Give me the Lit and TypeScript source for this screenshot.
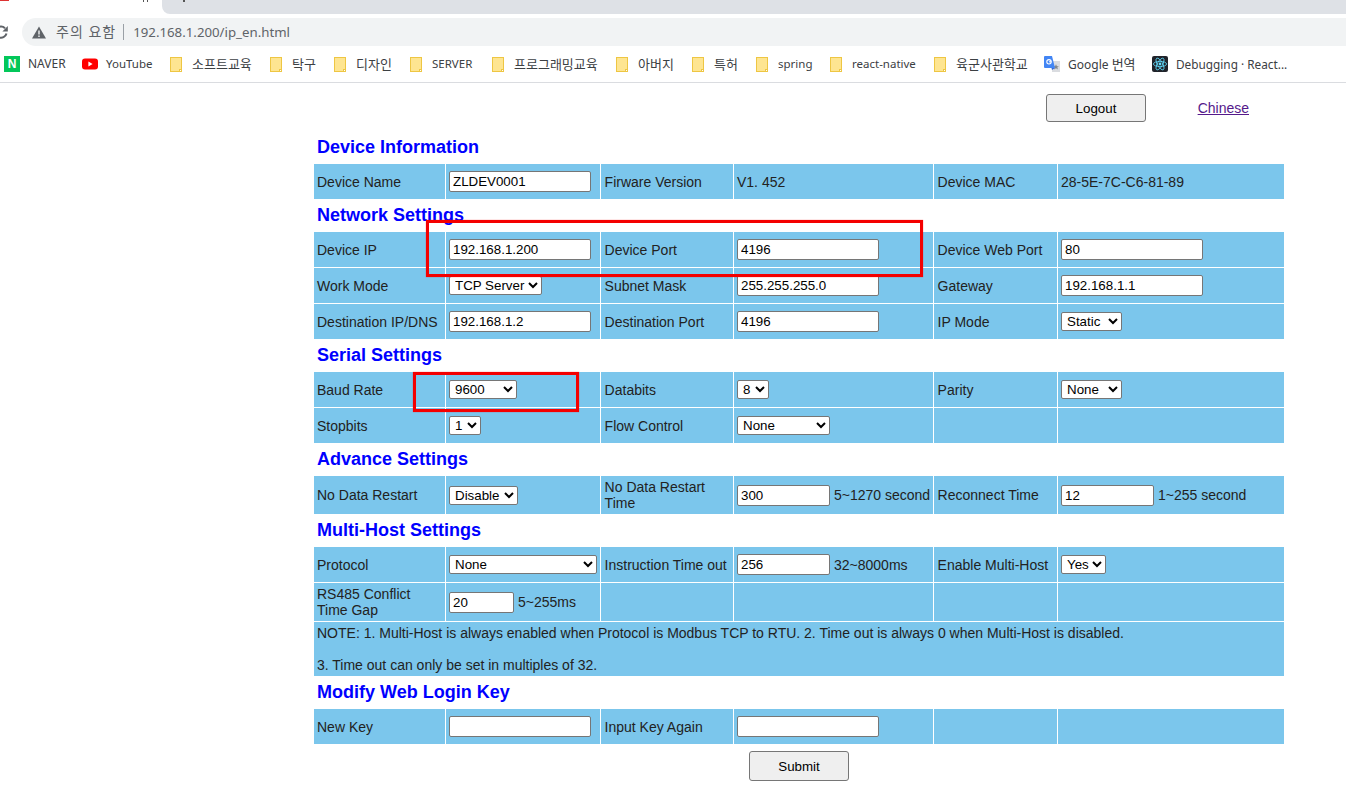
import { LitElement, html, css, nothing } from "lit";
import { customElement } from "lit/decorators.js";
import { styleMap } from "lit/directives/style-map.js";

type Cell =
  | { t: string }
  | { input: string; w: number; after?: string }
  | { select: string[]; w: number }
  | null;

const L = (t: string): Cell => ({ t });
const I = (input: string, w = 142, after?: string): Cell => ({ input, w, after });
const S = (w: number, ...select: string[]): Cell => ({ select, w });

const sections: { title: string; rows: Cell[][]; note?: boolean }[] = [
  {
    title: "Device Information",
    rows: [[L("Device Name"), I("ZLDEV0001"), L("Firware Version"), L("V1. 452"), L("Device MAC"), L("28-5E-7C-C6-81-89")]],
  },
  {
    title: "Network Settings",
    rows: [
      [L("Device IP"), I("192.168.1.200"), L("Device Port"), I("4196"), L("Device Web Port"), I("80")],
      [L("Work Mode"), S(93, "TCP Server", "TCP Client"), L("Subnet Mask"), I("255.255.255.0"), L("Gateway"), I("192.168.1.1")],
      [L("Destination IP/DNS"), I("192.168.1.2"), L("Destination Port"), I("4196"), L("IP Mode"), S(61, "Static", "DHCP")],
    ],
  },
  {
    title: "Serial Settings",
    rows: [
      [L("Baud Rate"), S(68, "9600", "115200"), L("Databits"), S(32, "8", "7"), L("Parity"), S(61, "None", "Odd", "Even")],
      [L("Stopbits"), S(32, "1", "2"), L("Flow Control"), S(93, "None", "CTS/RTS"), null, null],
    ],
  },
  {
    title: "Advance Settings",
    rows: [
      [L("No Data Restart"), S(69, "Disable", "Enable"), L("No Data Restart Time"), I("300", 93, "5~1270 second"), L("Reconnect Time"), I("12", 93, "1~255 second")],
    ],
  },
  {
    title: "Multi-Host Settings",
    note: true,
    rows: [
      [L("Protocol"), S(148, "None", "Modbus TCP to RTU"), L("Instruction Time out"), I("256", 93, "32~8000ms"), L("Enable Multi-Host"), S(45, "Yes", "No")],
      [L("RS485 Conflict Time Gap"), I("20", 65, "5~255ms"), null, null, null, null],
    ],
  },
  {
    title: "Modify Web Login Key",
    rows: [[L("New Key"), I(""), L("Input Key Again"), I(""), null, null]],
  },
];

/* icon kind, latin part, hangul part, label width, latin size class */
const bookmarks: [string, string, string, number, string][] = [
  ["naver", "NAVER", "", 38, "lg"],
  ["yt", "YouTube", "", 46, ""],
  ["f", "", "소프트교육", 60, ""],
  ["f", "", "탁구", 24, ""],
  ["f", "", "디자인", 36, ""],
  ["f", "SERVER", "", 42, ""],
  ["f", "", "프로그래밍교육", 84, ""],
  ["f", "", "아버지", 36, ""],
  ["f", "", "특허", 24, ""],
  ["f", "spring", "", 34, ""],
  ["f", "react-native", "", 64, ""],
  ["f", "", "육군사관학교", 72, ""],
  ["gt", "Google ", "번역", 68, "lg"],
  ["react", "Debugging · React...", "", 111, "md"],
];

@customElement("app-root")
export class AppRoot extends LitElement {
  static styles = css`
    :host {
      display: block;
      position: relative;
      width: 1346px;
      height: 808px;
      overflow: hidden;
      background: #fff;
      font-family: "Liberation Sans", Arial, sans-serif;
      font-size: 14px;
      line-height: 16px;
      color: #222;
    }
    .tabs {
      height: 14px;
      display: flex;
      background: #fff;
    }
    .tab-active {
      width: 162px;
      position: relative;
    }
    .tab-active i {
      position: absolute;
      left: 0;
      top: 0;
      width: 9px;
      height: 1px;
      background: #d33;
    }
    .tab-active b {
      position: absolute;
      left: 143px;
      top: 0;
      width: 1px;
      height: 2px;
      background: #555;
      box-shadow: 4px 0 0 #555;
    }
    .tab-rest {
      flex: 1;
      background: #dee1e6;
      border-bottom-left-radius: 8px;
      position: relative;
    }
    .tab-rest b {
      position: absolute;
      left: 21px;
      top: 0;
      width: 2px;
      height: 2px;
      background: #555;
    }
    .addr-row {
      height: 32px;
      display: flex;
      align-items: flex-end;
    }
    .reload {
      width: 22px;
      height: 28px;
      display: flex;
      align-items: center;
      flex: none;
    }
    .pill {
      flex: 1;
      height: 28px;
      background: #f1f3f4;
      border-radius: 14px 0 0 14px;
      display: flex;
      align-items: center;
      padding-left: 10px;
      color: #5f6368;
      font-family: "Noto Sans", "Noto Sans CJK KR", sans-serif;
      font-size: 13.25px;
    }
    .warn {
      margin-right: 10px;
      display: block;
    }
    .warn-text {
      font-size: 14px;
      letter-spacing: 1px;
      margin-right: -1px;
    }
    .sep {
      width: 1px;
      height: 16px;
      background: #9aa0a6;
      margin: 0 9px 0 8px;
    }
    .bookmarks {
      height: 36px;
      border-bottom: 1px solid #dadce0;
      display: flex;
      align-items: center;
      gap: 16px;
      padding-left: 4px;
      font-family: "Noto Sans", "Noto Sans CJK KR", sans-serif;
      font-size: 11.5px;
      color: #3c4043;
      white-space: nowrap;
    }
    .bm {
      display: flex;
      align-items: center;
      gap: 8px;
    }
    .lg {
      font-size: 12px;
    }
    .md {
      font-size: 11.8px;
    }
    .ko {
      font-size: 13px;
    }
    .ico {
      width: 16px;
      height: 16px;
      display: block;
      flex: none;
    }
    .naver {
      background: #03c75a;
      color: #fff;
      font: bold 12px/16px "Liberation Sans", sans-serif;
      text-align: center;
    }
    .page {
      padding-left: 314px;
      width: 970px;
    }
    .top {
      height: 48px;
      box-sizing: border-box;
      padding: 11px 35px 0 732px;
      display: flex;
      justify-content: space-between;
      align-items: flex-start;
    }
    .btn {
      width: 100px;
      height: 28px;
      box-sizing: border-box;
      background: #efefef;
      border: 1px solid #767676;
      border-radius: 3px;
      font: 13.33px "Liberation Sans", sans-serif;
      color: #000;
      padding: 0;
    }
    .link {
      color: #551a8b;
      text-decoration: underline;
      margin-top: 6px;
    }
    h2 {
      margin: 0;
      height: 33px;
      box-sizing: border-box;
      padding: 6px 0 0 3px;
      font-size: 18px;
      line-height: 21px;
      font-weight: bold;
      color: #0000ff;
    }
    .grid {
      display: grid;
      grid-template-columns: 131px 154px 132px 199px 123px 226px;
      gap: 1px;
    }
    .cell {
      background: #7bc6ec;
      min-height: 35px;
      box-sizing: border-box;
      padding: 3px;
      display: flex;
      align-items: center;
      gap: 4px;
    }
    .cell:nth-child(6n + 3),
    .cell:nth-child(6n + 5) {
      padding-left: 3.6px;
    }
    .cell span {
      white-space: nowrap;
    }
    .cell.note {
      grid-column: 1 / -1;
      display: block;
      padding-left: 3px;
    }
    input,
    select {
      box-sizing: border-box;
      margin: 0;
      font: 13.33px "Liberation Sans", sans-serif;
      color: #000;
      background: #fff;
      border: 1px solid #767676;
      border-radius: 2px;
      flex: none;
    }
    input {
      height: 21px;
      padding: 1px 3px;
    }
    select {
      height: 19px;
      padding: 0 0 0 1px;
    }
    .foot {
      display: flex;
      justify-content: center;
      padding: 7px 0 0 0;
    }
    .foot .btn {
      height: 30px;
    }
    .mark {
      position: absolute;
      box-sizing: border-box;
      border: 3px solid #f40000;
      box-shadow: 0 0 1px rgba(244, 0, 0, 0.6);
      pointer-events: none;
    }
    .m1 {
      left: 426px;
      top: 220px;
      width: 497px;
      height: 57px;
    }
    .m2 {
      left: 413px;
      top: 372px;
      width: 166px;
      height: 40px;
    }
  `;

  private icon(kind: string) {
    switch (kind) {
      case "naver":
        return html`<span class="ico naver">N</span>`;
      case "yt":
        return html`<svg class="ico" viewBox="0 0 16 16">
          <rect x="0" y="2.5" width="16" height="11" rx="3" fill="#f00" />
          <path d="M6.4 5.6 10.6 8 6.4 10.4z" fill="#fff" />
        </svg>`;
      case "gt":
        return html`<svg class="ico" viewBox="0 0 16 16">
          <path d="M8 5h8v11H8z" fill="#dadce0" />
          <path d="M12 8.2l.9 2h2l-1.6 1.3.6 2-1.9-1.2-1.9 1.2.6-2-1.6-1.3h2z" fill="#80868b" />
          <path d="M1 0h7l3 12H1a1 1 0 0 1-1-1V1a1 1 0 0 1 1-1z" fill="#4285f4" />
          <path d="M8 14l3-2H7.5z" fill="#3367d6" />
          <circle cx="5" cy="5.8" r="2.2" fill="none" stroke="#fff" stroke-width="1.1" />
          <path d="M5 5.8h2.4" stroke="#fff" stroke-width="1" />
        </svg>`;
      case "react":
        return html`<svg class="ico" viewBox="0 0 16 16">
          <rect width="16" height="16" rx="2" fill="#20232a" />
          <circle cx="8" cy="8" r="1.4" fill="#61dafb" />
          <g fill="none" stroke="#61dafb" stroke-width=".8">
            <ellipse cx="8" cy="8" rx="6.6" ry="2.6" />
            <ellipse cx="8" cy="8" rx="6.6" ry="2.6" transform="rotate(60 8 8)" />
            <ellipse cx="8" cy="8" rx="6.6" ry="2.6" transform="rotate(120 8 8)" />
          </g>
        </svg>`;
      default:
        return html`<svg class="ico" viewBox="0 0 16 16">
          <rect x="2.5" y="1.5" width="11" height="14" fill="#fee591" stroke="#eec643" />
          <rect x="11.5" y="13.5" width="2" height="2" fill="#fff" stroke="#eec643" />
        </svg>`;
    }
  }

  private cell(c: Cell) {
    if (c === null) return html`<div class="cell"></div>`;
    if ("t" in c) return html`<div class="cell">${c.t}</div>`;
    const w = styleMap({ width: `${c.w}px` });
    if ("select" in c)
      return html`<div class="cell">
        <select style=${w}>${c.select.map((o) => html`<option>${o}</option>`)}</select>
      </div>`;
    return html`<div class="cell">
      <input style=${w} .value=${c.input} />${c.after ? html`<span>${c.after}</span>` : nothing}
    </div>`;
  }

  render() {
    return html`
      <div class="tabs">
        <div class="tab-active"><i></i><b></b></div>
        <div class="tab-rest"><b></b></div>
      </div>
      <div class="addr-row">
        <div class="reload">
          <svg width="8" height="16" viewBox="0 0 8 16">
            <path d="M5 4.2A5.6 5.6 0 1 0 6.5 9.5" fill="none" stroke="#5f6368" stroke-width="2" />
            <path d="M7.8 2v5.4H2.4z" fill="#5f6368" />
          </svg>
        </div>
        <div class="pill">
          <svg class="warn" width="14" height="13" viewBox="0 0 14 13">
            <path d="M7 .5 14 12.5H0z" fill="#5f6368" />
            <path d="M6.3 4.5h1.4v4H6.3zM6.3 9.5h1.4v1.4H6.3z" fill="#f1f3f4" />
          </svg>
          <span class="warn-text">주의 요함</span><span class="sep"></span><span>192.168.1.200/ip_en.html</span>
        </div>
      </div>
      <div class="bookmarks">
        ${bookmarks.map(
          ([k, t, ko, w, size]) =>
            html`<div class="bm">
              ${this.icon(k)}<span class=${size} style=${styleMap({ width: `${w}px` })}
                >${t}${ko ? html`<span class="ko">${ko}</span>` : nothing}</span
              >
            </div>`
        )}
      </div>
      <div class="page">
        <div class="top">
          <button class="btn">Logout</button>
          <a class="link">Chinese</a>
        </div>
        ${sections.map(
          (s) => html`
            <h2>${s.title}</h2>
            <div class="grid">
              ${s.rows.map((r) => r.map((c) => this.cell(c)))}
              ${s.note
                ? html`<div class="cell note">
                    NOTE: 1. Multi-Host is always enabled when Protocol is Modbus TCP to RTU. 2. Time out is always 0 when Multi-Host is disabled.<br /><br />3. Time out can only be set in multiples of 32.
                  </div>`
                : nothing}
            </div>
          `
        )}
        <div class="foot"><button class="btn">Submit</button></div>
      </div>
      <div class="mark m1"></div>
      <div class="mark m2"></div>
    `;
  }
}
